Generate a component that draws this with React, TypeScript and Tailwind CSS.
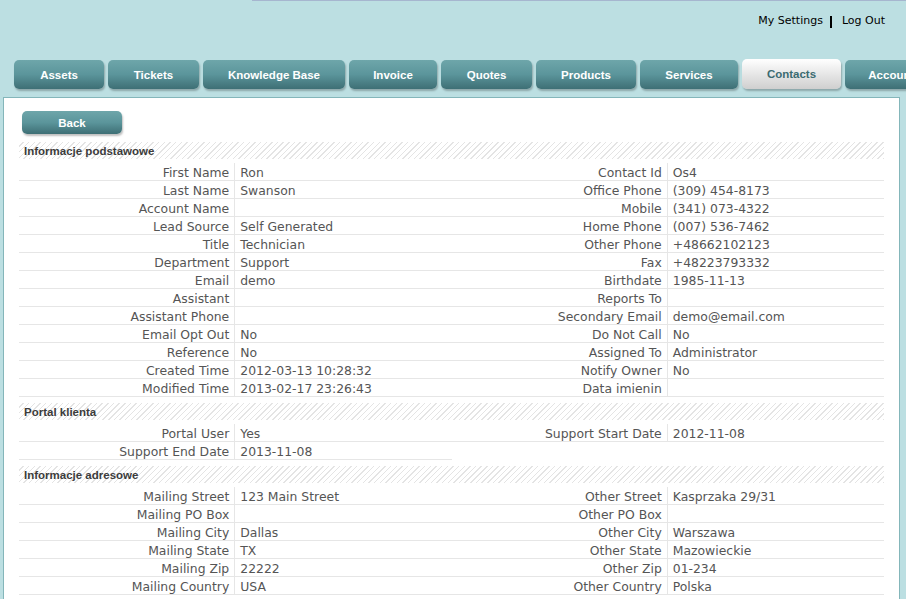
import React from 'react'

type Row = [string, string]

const TABS: { label: string; w: string; active?: boolean }[] = [
  { label: 'Assets', w: 'w-[90px]' },
  { label: 'Tickets', w: 'w-[91px]' },
  { label: 'Knowledge Base', w: 'w-[142px]' },
  { label: 'Invoice', w: 'w-[88px]' },
  { label: 'Quotes', w: 'w-[91px]' },
  { label: 'Products', w: 'w-[100px]' },
  { label: 'Services', w: 'w-[98px]' },
  { label: 'Contacts', w: 'w-[99px]', active: true },
  { label: 'Accounts', w: 'w-[99px]' },
]

const BASIC_LEFT: Row[] = [
  ['First Name', 'Ron'],
  ['Last Name', 'Swanson'],
  ['Account Name', ''],
  ['Lead Source', 'Self Generated'],
  ['Title', 'Technician'],
  ['Department', 'Support'],
  ['Email', 'demo'],
  ['Assistant', ''],
  ['Assistant Phone', ''],
  ['Email Opt Out', 'No'],
  ['Reference', 'No'],
  ['Created Time', '2012-03-13 10:28:32'],
  ['Modified Time', '2013-02-17 23:26:43'],
]

const BASIC_RIGHT: Row[] = [
  ['Contact Id', 'Os4'],
  ['Office Phone', '(309) 454-8173'],
  ['Mobile', '(341) 073-4322'],
  ['Home Phone', '(007) 536-7462'],
  ['Other Phone', '+48662102123'],
  ['Fax', '+48223793332'],
  ['Birthdate', '1985-11-13'],
  ['Reports To', ''],
  ['Secondary Email', 'demo@email.com'],
  ['Do Not Call', 'No'],
  ['Assigned To', 'Administrator'],
  ['Notify Owner', 'No'],
  ['Data imienin', ''],
]

const PORTAL_LEFT: Row[] = [
  ['Portal User', 'Yes'],
  ['Support End Date', '2013-11-08'],
]

const PORTAL_RIGHT: Row[] = [['Support Start Date', '2012-11-08']]

const ADDR_LEFT: Row[] = [
  ['Mailing Street', '123 Main Street'],
  ['Mailing PO Box', ''],
  ['Mailing City', 'Dallas'],
  ['Mailing State', 'TX'],
  ['Mailing Zip', '22222'],
  ['Mailing Country', 'USA'],
]

const ADDR_RIGHT: Row[] = [
  ['Other Street', 'Kasprzaka 29/31'],
  ['Other PO Box', ''],
  ['Other City', 'Warszawa'],
  ['Other State', 'Mazowieckie'],
  ['Other Zip', '01-234'],
  ['Other Country', 'Polska'],
]

function FieldList({ rows }: { rows: Row[] }) {
  return (
    <div className="flex flex-col">
      {rows.map(([label, value]) => (
        <div key={label} className="flex h-[18px] border-b border-[#e6e6e6]">
          <div className="w-1/2 pr-[5px] pt-[1px] text-right leading-[18px] border-r border-[#e6e6e6] whitespace-nowrap">
            {label}
          </div>
          <div className="w-1/2 pl-[5px] pt-[1px] leading-[18px] whitespace-nowrap">{value}</div>
        </div>
      ))}
    </div>
  )
}

function Section({ title, left, right, className = '' }: { title: string; left: Row[]; right: Row[]; className?: string }) {
  return (
    <div className={className}>
      <div className="h-[17px] pl-[5px] bg-[image:repeating-linear-gradient(-45deg,#e4e4e4_0px,#e4e4e4_1px,#ffffff_1px,#ffffff_4px)] font-['Liberation_Sans',Arial,sans-serif] font-bold text-[11.5px] leading-[18px] text-[#3c3c3c]">
        {title}
      </div>
      <div className="grid grid-cols-2 mt-[4px] items-start">
        <FieldList rows={left} />
        <FieldList rows={right} />
      </div>
    </div>
  )
}

export default function App() {
  return (
    <div className="w-[906px] h-[599px] overflow-hidden bg-[#bcdfe2] font-['DejaVu_Sans',Verdana,sans-serif]">
      {/* top bar */}
      <div className="ml-[252px] h-px bg-[#a6b6cf]" />
      <div className="flex justify-end items-center pr-[21px] mt-[14px] h-[13px] text-[11px] text-black">
        <span>My Settings</span>
        <span className="ml-[7px] mr-[10px] w-[2px] h-[12px] bg-black" />
        <span>Log Out</span>
      </div>

      {/* tabs */}
      <div className="flex items-end gap-[4px] ml-[14px] mt-[31px] h-[30px] whitespace-nowrap font-['Liberation_Sans',Arial,sans-serif] font-bold text-[11.5px]">
        {TABS.map(t => (
          <div
            key={t.label}
            className={`flex-shrink-0 ${t.w} flex items-center justify-center rounded-[5px] shadow-[1px_2px_2px_rgba(0,0,0,0.25)] ${
              t.active
                ? 'h-[30px] pt-[1px] bg-linear-to-b from-[#ffffff] to-[#cfcfcf] text-[#3b6b71]'
                : 'h-[29px] pt-[2px] bg-linear-to-b from-[#6ea6aa] via-[#5b959b] to-[#3e6f75] text-white'
            }`}
          >
            {t.label}
          </div>
        ))}
      </div>

      {/* content panel */}
      <div className="ml-[3px] mt-[8px] w-[897px] bg-white border border-[#84b6ba] px-[15px] pt-[13px] pb-4 text-[12.4px] text-[#555555]">
        <div className="ml-[3px] w-[100px] h-[23px] pt-[2px] flex items-center justify-center rounded-[5px] bg-linear-to-b from-[#6ea6aa] via-[#5b959b] to-[#3e6f75] text-white font-['Liberation_Sans',Arial,sans-serif] font-bold text-[11.5px] shadow-[1px_2px_2px_rgba(0,0,0,0.25)]">
          Back
        </div>

        <Section title="Informacje podstawowe" left={BASIC_LEFT} right={BASIC_RIGHT} className="mt-[8px]" />
        <Section title="Portal klienta" left={PORTAL_LEFT} right={PORTAL_RIGHT} className="mt-[6px]" />
        <Section title="Informacje adresowe" left={ADDR_LEFT} right={ADDR_RIGHT} className="mt-[6px]" />
      </div>
    </div>
  )
}
